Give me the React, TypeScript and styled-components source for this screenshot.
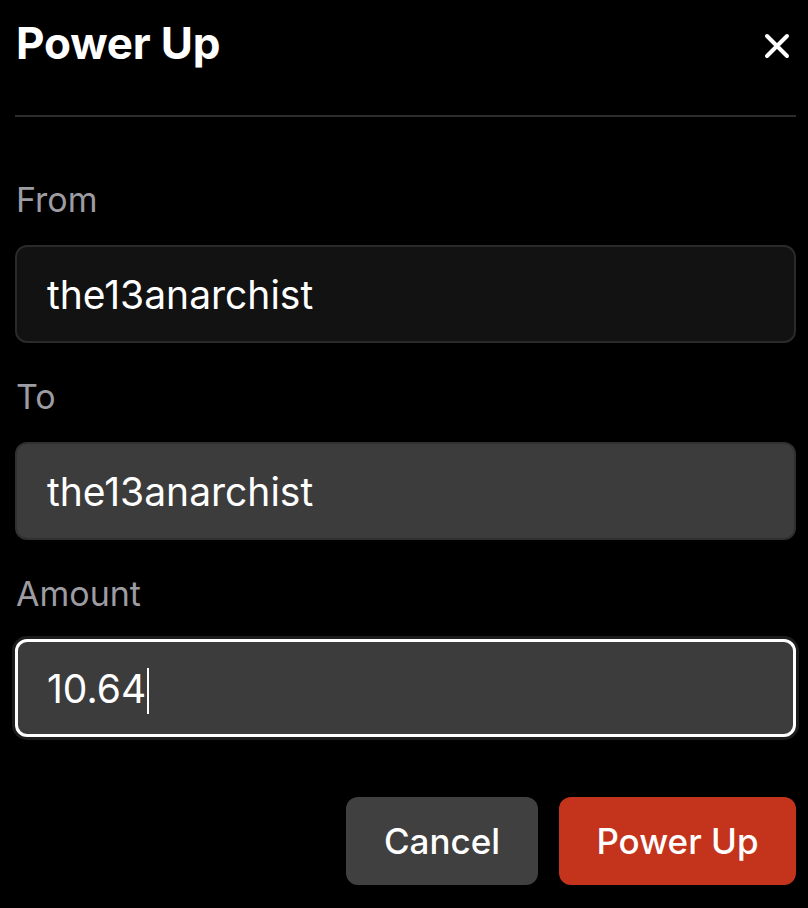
import * as React from "react";
import styled, { createGlobalStyle } from "styled-components";

const GlobalStyle = createGlobalStyle`
  html, body {
    margin: 0;
    padding: 0;
    background: #000;
  }
  body {
    font-family: Inter, "Noto Sans", sans-serif;
    color: #fff;
  }
`;

const Sheet = styled.div`
  width: 808px;
  height: 908px;
  box-sizing: border-box;
  padding: 0 12px 0 15px;
  background: #000;
  display: flex;
  flex-direction: column;
`;

const Header = styled.div`
  height: 117px;
  box-sizing: border-box;
  display: flex;
  align-items: flex-start;
  justify-content: space-between;
  padding-top: 18px;
  border-bottom: 2px solid #2c2c2e;
`;

const Title = styled.h1`
  margin: 0 0 0 1px;
  font-size: 44px;
  line-height: 50px;
  font-weight: 700;
  letter-spacing: -0.2px;
`;

const CloseButton = styled.button`
  margin: 14px 5px 0 0;
  padding: 0;
  width: 28px;
  height: 28px;
  background: none;
  border: none;
  color: #fff;
  display: flex;
  align-items: center;
  justify-content: center;
`;

const Form = styled.div`
  display: flex;
  flex-direction: column;
  gap: 34px;
  padding-top: 63px;
`;

const Field = styled.div`
  display: flex;
  flex-direction: column;
`;

const Label = styled.div`
  font-size: 34px;
  line-height: 40px;
  color: #9c9ca2;
  margin-bottom: 25px;
  padding-left: 1px;
`;

const Input = styled.div<{ $tone: "muted" | "filled" | "focus" }>`
  height: 98px;
  box-sizing: border-box;
  border-radius: 12px;
  display: flex;
  align-items: center;
  font-size: 39px;
  color: #fff;
  background: ${(p) => (p.$tone === "muted" ? "#121212" : "#3c3c3c")};
  border: ${(p) =>
    p.$tone === "focus" ? "3px solid #fff" : "2px solid " + (p.$tone === "muted" ? "#2a2a2a" : "#303030")};
  box-shadow: ${(p) => (p.$tone === "focus" ? "0 0 0 3px #1c1c1c" : "none")};
  padding-left: ${(p) => (p.$tone === "focus" ? "29px" : "30px")};
`;

const Caret = styled.span`
  display: inline-block;
  width: 2px;
  height: 46px;
  background: #fff;
  margin-left: 1px;
  transform: translateY(3px);
`;

const Actions = styled.div`
  display: flex;
  justify-content: flex-end;
  gap: 21px;
  margin-top: 60px;
`;

const Button = styled.button<{ $primary?: boolean }>`
  height: 88px;
  padding: 0 30px;
  border: none;
  border-radius: 12px;
  font-family: Inter, "Noto Sans", sans-serif;
  font-size: 35px;
  font-weight: 500;
  color: #fff;
  background: ${(p) => (p.$primary ? "#c4331b" : "#404040")};
  min-width: ${(p) => (p.$primary ? "237px" : "192px")};
`;

export default function App() {
  return (
    <>
      <GlobalStyle />
      <Sheet>
        <Header>
          <Title>Power Up</Title>
          <CloseButton aria-label="Close">
            <svg width="26" height="26" viewBox="0 0 26 26" fill="none">
              <path d="M3 3L23 23M23 3L3 23" stroke="#fff" strokeWidth="4" strokeLinecap="round" />
            </svg>
          </CloseButton>
        </Header>
        <Form>
          <Field>
            <Label>From</Label>
            <Input $tone="muted">the13anarchist</Input>
          </Field>
          <Field>
            <Label>To</Label>
            <Input $tone="filled">the13anarchist</Input>
          </Field>
          <Field>
            <Label>Amount</Label>
            <Input $tone="focus">
              10.64
              <Caret />
            </Input>
          </Field>
        </Form>
        <Actions>
          <Button>Cancel</Button>
          <Button $primary>Power Up</Button>
        </Actions>
      </Sheet>
    </>
  );
}
